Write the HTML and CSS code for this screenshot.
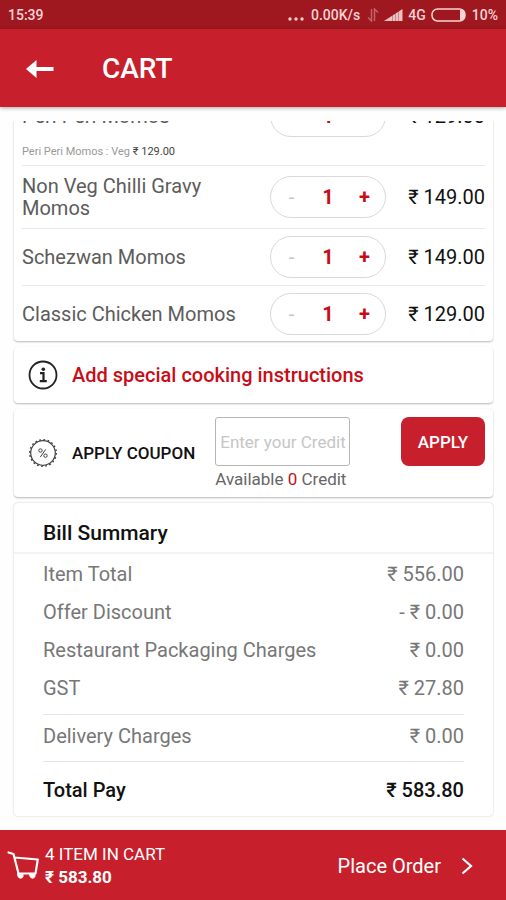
FILE: index.html
```html
<!DOCTYPE html>
<html lang="en">
<head>
<meta charset="utf-8">
<meta name="viewport" content="width=device-width, initial-scale=1">
<title>Cart</title>
<link rel="stylesheet" href="styles.css">
</head>
<body>
<div class="status">
  <span>15:39</span>
  <div class="status-info">
    <svg width="16" height="14" viewBox="0 0 16 14" fill="currentColor"><circle cx="2" cy="11" r="1.700"/><circle cx="8" cy="11" r="1.700"/><circle cx="14" cy="11" r="1.700"/></svg>
    <span class="speed">0.00K/s</span>
    <svg class="dim" width="12" height="14" viewBox="0 0 12 14" fill="none" stroke="currentColor" stroke-width="1.500"><path d="M4.500 1v12L1 9.500M7.500 13V1L11 4.500"/></svg>
    <svg class="signal" width="19" height="14" viewBox="0 0 19 14"><path d="M0 13L18.500 1v12z" fill="currentColor"/><path d="M8.500 7v7M11.500 5v9M14.500 3v11" stroke="#9f1820" stroke-width=".6" opacity=".6"/></svg>
    <span>4G</span>
    <svg class="battery" width="36" height="14" viewBox="0 0 36 14"><rect x="1" y="1" width="33" height="12" rx="5.500" fill="none" stroke="currentColor" stroke-width="1.500"/><path d="M29 2h2q3 1 3 5t-3 5h-2z" fill="currentColor"/></svg>
    <span>10%</span>
  </div>
</div>
<header class="appbar">
  <button class="back" type="button" aria-label="Back"><svg width="28" height="20" viewBox="0 0 28 20" fill="currentColor"><path d="M0 10L10.500 1v7H27.500v4H10.500v7z"/></svg></button>
  <h1>CART</h1>
</header>
<main>
  <div class="scroller">
    <section class="card items">
      <div class="item item-extra">
        <span class="name">Peri Peri Momos</span>
        <div class="stepper"><button type="button" aria-label="Remove one" class="minus">-</button><output>1</output><button type="button" aria-label="Add one">+</button></div>
        <span class="price">₹ 129.00</span>
        <span class="extra">Peri Peri Momos : Veg <b>₹ 129.00</b></span>
      </div>
      <div class="item">
        <span class="name">Non Veg Chilli Gravy Momos</span>
        <div class="stepper"><button type="button" aria-label="Remove one" class="minus">-</button><output>1</output><button type="button" aria-label="Add one">+</button></div>
        <span class="price">₹ 149.00</span>
      </div>
      <div class="item">
        <span class="name">Schezwan Momos</span>
        <div class="stepper"><button type="button" aria-label="Remove one" class="minus">-</button><output>1</output><button type="button" aria-label="Add one">+</button></div>
        <span class="price">₹ 149.00</span>
      </div>
      <div class="item">
        <span class="name">Classic Chicken Momos</span>
        <div class="stepper"><button type="button" aria-label="Remove one" class="minus">-</button><output>1</output><button type="button" aria-label="Add one">+</button></div>
        <span class="price">₹ 129.00</span>
      </div>
    </section>
    <section class="card">
      <button class="instructions" type="button">
        <svg width="30" height="30" viewBox="0 0 30 30" fill="none" stroke="#222"><circle cx="15" cy="15" r="13.500" stroke-width="1.800"/><circle cx="15.300" cy="9.300" r="1.800" fill="#222" stroke="none"/><path d="M12 13.200h3.500v8M11.800 21.200h7" stroke-width="2.200"/></svg>
        Add special cooking instructions
      </button>
    </section>
    <form class="card coupon">
      <svg width="30" height="30" viewBox="0 0 30 30" fill="none" stroke="#444"><circle cx="15" cy="15" r="12.300" stroke-width="1.200"/><circle cx="15" cy="15" r="13.300" stroke-width="1.400" stroke-dasharray="1.800 2.378"/><circle cx="12.500" cy="12.500" r="1.700"/><circle cx="17.500" cy="17.700" r="1.700"/><path d="M17.800 11.300L12.300 19"/></svg>
      <label for="credit">APPLY COUPON</label>
      <div class="credit">
        <input id="credit" type="text" placeholder="Enter your Credit">
        <span>Available <em>0</em> Credit</span>
      </div>
      <button class="apply" type="button">APPLY</button>
    </form>
    <section class="card bill">
      <h2>Bill Summary</h2>
      <dl>
        <div><dt>Item Total</dt><dd>₹ 556.00</dd></div>
        <div><dt>Offer Discount</dt><dd>- ₹ 0.00</dd></div>
        <div><dt>Restaurant Packaging Charges</dt><dd>₹ 0.00</dd></div>
        <div><dt>GST</dt><dd>₹ 27.80</dd></div>
        <div class="delivery"><dt>Delivery Charges</dt><dd>₹ 0.00</dd></div>
        <div class="total"><dt>Total Pay</dt><dd>₹ 583.80</dd></div>
      </dl>
    </section>
  </div>
</main>
<footer>
  <svg width="32" height="30" viewBox="0 0 32 30" fill="none" stroke="currentColor" stroke-width="2.200" stroke-linejoin="round" stroke-linecap="round"><path d="M1.500 1.500l5 1.500 5 19.500h17M7.500 6.500l23.300 2-2.300 14"/><path d="M11 22.500h5v3a2.700 2.700 0 0 1-5 0zM23 22.500h5v3a2.700 2.700 0 0 1-5 0z" fill="currentColor" stroke-width="1"/></svg>
  <div class="summary"><span>4 ITEM IN CART</span><strong>₹ 583.80</strong></div>
  <button class="order" type="button">Place Order
    <svg width="12" height="18" viewBox="0 0 12 18" fill="none" stroke="currentColor" stroke-width="2.200"><path d="M1.500 1.500L10 9l-8.500 7.500"/></svg>
  </button>
</footer>
</body>
</html>
```
FILE: styles.css
```css
* { box-sizing: border-box; }

body {
  margin: 0;
  height: 100vh;
  display: flex;
  flex-direction: column;
  background: #fefefe;
  color: #111;
  font-family: Roboto, "Liberation Sans", sans-serif;
  font-size: 20px;
  line-height: 22px;
}

button {
  border: 0;
  padding: 0;
  background: none;
  color: inherit;
  font: inherit;
  cursor: pointer;
}

svg { flex: none; display: block; }

.status {
  flex: none;
  height: 29px;
  padding: 0 8px;
  display: flex;
  align-items: center;
  justify-content: space-between;
  background: #9f1820;
  color: #f6d3d3;
  font-size: 14px;
  font-weight: 500;
}

.status-info { display: flex; align-items: center; gap: 5px; }
.speed { margin: 0 2px; }
.dim { opacity: .4; }
.signal { opacity: .9; }

.appbar {
  flex: none;
  height: 78px;
  padding: 2px 26px 0;
  display: flex;
  align-items: center;
  gap: 48px;
  background: #c71f2b;
  color: #fff;
  box-shadow: 0 1px 4px rgba(0, 0, 0, .35);
}

h1 { margin: 0; font-size: 28px; line-height: 32px; font-weight: 500; }

main {
  flex: 1;
  min-height: 0;
  display: flex;
  padding: 14px 12px 12px;
}

/* Anchored to the bottom, so the oldest cart rows run off the top edge. */
.scroller {
  flex: 1;
  min-width: 0;
  display: flex;
  flex-direction: column;
  justify-content: flex-end;
  gap: 6px;
  padding: 0 1px 2px 2px;
  overflow: hidden;
}

.card {
  flex: none;
  border-radius: 4px;
  background: #fff;
  box-shadow: 0 1px 2px rgba(0, 0, 0, .28);
}

.bill { box-shadow: 0 0 2px rgba(0, 0, 0, .24); }

.items { padding: 0 8px; }

.item {
  min-height: 57px;
  display: grid;
  grid-template-columns: 1fr 116px 99px;
  align-items: center;
  border-top: 1px solid #e8e8e8;
}

.item:first-child { border-top: 0; }
.item:last-child { min-height: 56px; }
.item-extra { padding: 8px 0 4px; row-gap: 6px; }
.item:nth-child(2) { min-height: 63px; }

.name { max-width: 220px; color: #5c5c5c; }
.price { text-align: right; }
.extra { grid-column: 1 / -1; font-size: 11px; line-height: 18px; color: #999; }
.extra b { font-weight: 400; color: #444; }

.stepper {
  height: 42px;
  padding: 0 4px;
  display: grid;
  grid-template-columns: 1fr 40px 1fr;
  align-items: center;
  text-align: center;
  border: 1px solid #d9d9d9;
  border-radius: 21px;
  color: #c80d18;
  font-weight: 700;
}

.stepper .minus { color: #c4c4c4; font-weight: 400; }

.instructions {
  width: 100%;
  height: 56px;
  padding: 0 14px;
  display: flex;
  align-items: center;
  gap: 14px;
  color: #c80d18;
  font-weight: 500;
}

.coupon {
  height: 88px;
  padding: 0 8px 0 14px;
  display: flex;
  align-items: center;
}

.coupon label { margin-left: 14px; font-size: 17px; font-weight: 500; }

.credit {
  width: 135px;
  margin-left: 20px;
  align-self: flex-start;
  padding-top: 8px;
}

.credit input {
  display: block;
  width: 100%;
  height: 49px;
  padding: 0 4px;
  border: 1px solid #b5b5b5;
  border-radius: 3px;
  background: #fff;
  font: 400 17px Roboto, "Liberation Sans", sans-serif;
}

.credit input::placeholder { color: #c6c6c6; opacity: 1; }
.credit span { display: block; padding-top: 2px; font-size: 17px; color: #666; white-space: nowrap; }
.credit em { font-style: normal; color: #c80d18; }

.apply {
  width: 84px;
  height: 49px;
  margin: 8px 0 0 auto;
  align-self: flex-start;
  border-radius: 8px;
  background: #c71f2b;
  color: #fff;
  font-size: 17px;
  font-weight: 500;
}

h2 {
  margin: 0;
  height: 51px;
  padding: 8px 29px 0;
  font-size: 21px;
  line-height: 44px;
  font-weight: 500;
  border-bottom: 2px solid #f3f3f3;
}

dl { margin: 0; padding: 1px 29px 0; color: #777; }
dl div { height: 38px; display: flex; align-items: center; justify-content: space-between; }
dd { margin: 0; }

dl .delivery {
  height: 48px;
  margin-top: 7px;
  padding-bottom: 4px;
  border: solid #e4e4e4;
  border-width: 1px 0;
}

dl .total { height: 54px; padding-top: 2px; color: #111; font-weight: 500; }

footer {
  flex: none;
  height: 70px;
  padding: 2px 33px 0 7px;
  display: flex;
  align-items: center;
  gap: 6px;
  background: #c71f2b;
  color: #fff;
}

.summary { display: flex; flex-direction: column; font-size: 17px; line-height: 23px; }
.summary strong { font-weight: 700; }

.order {
  margin-left: auto;
  display: flex;
  align-items: center;
  gap: 20px;
}
```
